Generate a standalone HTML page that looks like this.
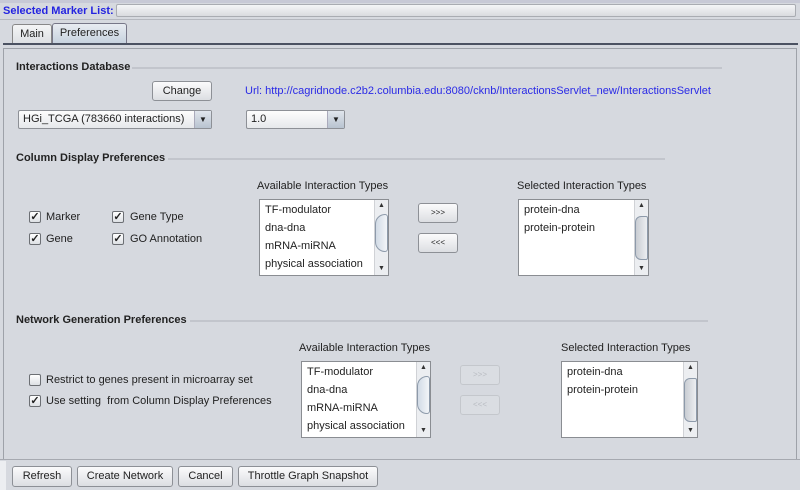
<!DOCTYPE html><html><head><style>
*{box-sizing:border-box;margin:0;padding:0}
body{width:800px;height:490px;background:#d6d9df;font-family:"Liberation Sans",sans-serif;font-size:11px;color:#222;position:relative;overflow:hidden}
.a{position:absolute}
.b{font-weight:bold;font-size:11px}
.line{position:absolute;height:2px;background:#c2c5cc}
.btn{position:absolute;border:1px solid #8d9096;border-radius:3px;background:linear-gradient(#fbfbfc,#dcdee2);text-align:center;font-size:11px;line-height:18px}
.dis{color:#b9bcc2;border-color:#c4c7cc;background:#dadde2}
.list{position:absolute;background:#fff;border:1px solid #8a8d92;overflow:hidden}
.list div{padding-left:5px;height:18px;line-height:18px}
.list .sb{position:absolute;right:0;top:0;bottom:0;width:14px;padding:0;height:auto;background:#eceef1;border-left:1px solid #d0d2d6}
.list .th{position:absolute;left:0;width:13px;top:14px;height:38px;padding:0;border:1px solid #8d9aaa;border-radius:10px 3px 3px 10px;background:linear-gradient(90deg,#d2dbe6,#f2f5f8)}
.list .up,.list .dn{position:absolute;left:0;width:13px;height:12px;padding:0;font-size:7px;line-height:12px;text-align:center;color:#333}
.list .up{top:0}.list .dn{bottom:0}
.cb{position:absolute;width:12px;height:12px;border:1px solid #6c6f74;border-radius:2px;background:linear-gradient(#fff,#dde0e4);font-size:11px;line-height:10px;text-align:center;font-weight:bold}
.combo{position:absolute;border:1px solid #8d9096;border-radius:2px;background:linear-gradient(#fdfdfd,#e6e8eb);line-height:17px;padding-left:4px;font-size:11px}
.arr{position:absolute;right:0;top:0;bottom:0;width:17px;border-left:1px solid #aab;background:linear-gradient(#e0e5ec,#b8c3d0);text-align:center;font-size:8px;line-height:17px}
</style></head><body>
<div class="a" style="left:0;top:0;width:800px;height:3px;background:#c7c9d6"></div>
<div class="a b" style="left:3px;top:5px;color:#2424e0">Selected Marker List:</div>
<div class="a" style="left:116px;top:4px;width:680px;height:13px;border:1px solid #a9acb2;border-radius:2px;background:linear-gradient(#f4f5f7,#d9dbdf)"></div>
<div class="a" style="left:0;top:19px;width:800px;height:1px;background:#b5b8bf"></div>
<div class="a" style="left:12px;top:24px;width:40px;height:20px;border:1px solid #888;border-bottom:none;border-radius:3px 3px 0 0;background:linear-gradient(#f4f5f6,#dcdfe3);text-align:center;line-height:18px">Main</div>
<div class="a" style="left:52px;top:23px;width:75px;height:21px;border:1px solid #778;border-bottom:none;border-radius:3px 3px 0 0;background:linear-gradient(#e8ecf2,#c5d1de);text-align:center;line-height:19px">Preferences</div>
<div class="a" style="left:3px;top:43px;width:795px;height:2px;background:#4b5262"></div>
<div class="a" style="left:3px;top:48px;width:794px;height:411px;border:1px solid #9ea2a9;border-bottom:none"></div>

<div class="a b" style="left:16px;top:61px">Interactions Database</div>
<div class="line" style="left:132px;top:67px;width:590px"></div>
<div class="btn" style="left:152px;top:81px;width:60px;height:20px">Change</div>
<div class="a" style="left:245px;top:85px;color:#2a2ae6">Url: http://cagridnode.c2b2.columbia.edu:8080/cknb/InteractionsServlet_new/InteractionsServlet</div>
<div class="combo" style="left:18px;top:110px;width:194px;height:19px">HGi_TCGA (783660 interactions)<div class="arr">▼</div></div>
<div class="combo" style="left:246px;top:110px;width:99px;height:19px">1.0<div class="arr">▼</div></div>

<div class="a b" style="left:16px;top:152px">Column Display Preferences</div>
<div class="line" style="left:168px;top:158px;width:497px"></div>
<div class="cb" style="left:29px;top:211px">✓</div><div class="a" style="left:46px;top:211px">Marker</div>
<div class="cb" style="left:29px;top:233px">✓</div><div class="a" style="left:46px;top:233px">Gene</div>
<div class="cb" style="left:112px;top:211px">✓</div><div class="a" style="left:130px;top:211px">Gene Type</div>
<div class="cb" style="left:112px;top:233px">✓</div><div class="a" style="left:130px;top:233px">GO Annotation</div>
<div class="a" style="left:257px;top:180px">Available Interaction Types</div>
<div class="list" style="left:259px;top:199px;width:130px;height:77px;padding-top:1px"><div>TF-modulator</div><div>dna-dna</div><div>mRNA-miRNA</div><div>physical association</div><div class="sb"><div class="up">▲</div><div class="th"></div><div class="dn">▼</div></div></div>
<div class="btn" style="left:418px;top:203px;width:40px;height:20px;font-size:8px">&gt;&gt;&gt;</div>
<div class="btn" style="left:418px;top:233px;width:40px;height:20px;font-size:8px">&lt;&lt;&lt;</div>
<div class="a" style="left:517px;top:180px">Selected Interaction Types</div>
<div class="list" style="left:518px;top:199px;width:131px;height:77px;padding-top:1px"><div>protein-dna</div><div>protein-protein</div><div class="sb"><div class="up">▲</div><div class="th" style="top:16px;height:44px;border-radius:6px 2px 2px 6px;background:linear-gradient(90deg,#c9cdd3,#eceef1)"></div><div class="dn">▼</div></div></div>

<div class="a b" style="left:16px;top:314px">Network Generation Preferences</div>
<div class="line" style="left:190px;top:320px;width:518px"></div>
<div class="cb" style="left:29px;top:374px"></div><div class="a" style="left:46px;top:374px">Restrict to genes present in microarray set</div>
<div class="cb" style="left:29px;top:395px">✓</div><div class="a" style="left:46px;top:395px">Use setting&nbsp; from Column Display Preferences</div>
<div class="a" style="left:299px;top:342px">Available Interaction Types</div>
<div class="list" style="left:301px;top:361px;width:130px;height:77px;padding-top:1px"><div>TF-modulator</div><div>dna-dna</div><div>mRNA-miRNA</div><div>physical association</div><div class="sb"><div class="up">▲</div><div class="th"></div><div class="dn">▼</div></div></div>
<div class="btn dis" style="left:460px;top:365px;width:40px;height:20px;font-size:8px">&gt;&gt;&gt;</div>
<div class="btn dis" style="left:460px;top:395px;width:40px;height:20px;font-size:8px">&lt;&lt;&lt;</div>
<div class="a" style="left:561px;top:342px">Selected Interaction Types</div>
<div class="list" style="left:561px;top:361px;width:137px;height:77px;padding-top:1px"><div>protein-dna</div><div>protein-protein</div><div class="sb"><div class="up">▲</div><div class="th" style="top:16px;height:44px;border-radius:6px 2px 2px 6px;background:linear-gradient(90deg,#c9cdd3,#eceef1)"></div><div class="dn">▼</div></div></div>

<div class="a" style="left:0;top:459px;width:800px;height:1px;background:#a6a9b0"></div>
<div class="a" style="left:0;top:461px;width:6px;height:29px;background:#eceef1"></div>
<div class="btn" style="left:12px;top:466px;width:60px;height:21px">Refresh</div>
<div class="btn" style="left:77px;top:466px;width:96px;height:21px">Create Network</div>
<div class="btn" style="left:178px;top:466px;width:55px;height:21px">Cancel</div>
<div class="btn" style="left:238px;top:466px;width:140px;height:21px">Throttle Graph Snapshot</div>
</body></html>
